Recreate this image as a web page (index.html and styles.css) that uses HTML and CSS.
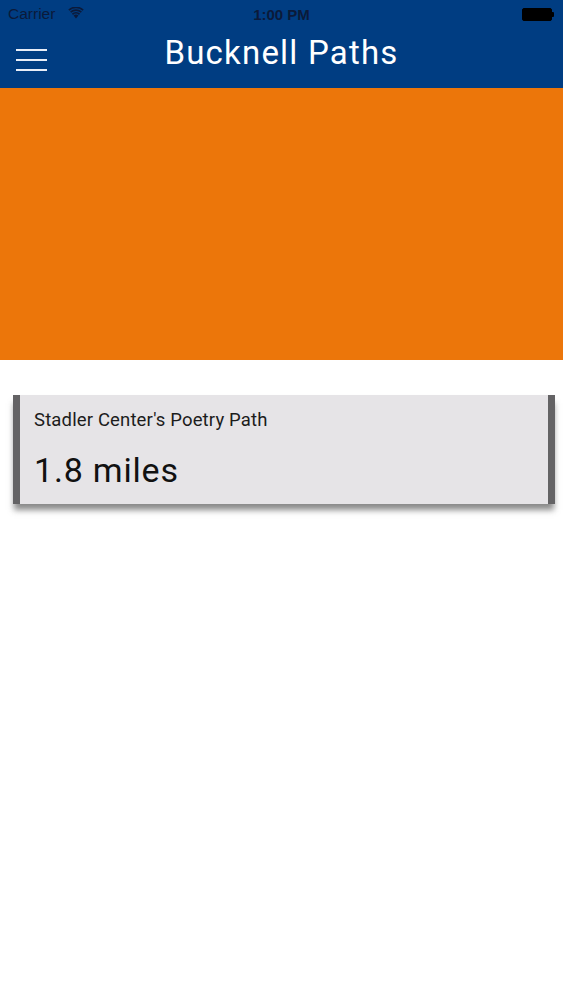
FILE: index.html
```html
<!DOCTYPE html>
<html>
<head>
<meta charset="utf-8">
<link rel="stylesheet" href="styles.css">
</head>
<body>
<div class="header">
  <div class="status">
    <div class="status-left">
      <span class="carrier">Carrier</span>
      <svg class="wifi" width="16" height="12" viewBox="0 0 16 12">
        <path d="M8 11.5 L5.6 8.6 A3.6 3.6 0 0 1 10.4 8.6 Z" fill="#0b1a3a"/>
        <path d="M3.9 6.6 A6.2 6.2 0 0 1 12.1 6.6 L11 7.9 A4.5 4.5 0 0 0 5 7.9 Z" fill="#0b1a3a"/>
        <path d="M2.1 4.5 A9 9 0 0 1 13.9 4.5 L12.8 5.8 A7.3 7.3 0 0 0 3.2 5.8 Z" fill="#0b1a3a"/>
        <path d="M0.3 2.4 A11.8 11.8 0 0 1 15.7 2.4 L14.6 3.7 A10.1 10.1 0 0 0 1.4 3.7 Z" fill="#0b1a3a"/>
      </svg>
    </div>
    <div class="time">1:00 PM</div>
    <div class="status-right">
      <div class="battery"></div>
      <div class="battery-nub"></div>
    </div>
  </div>
  <div class="navbar">
    <div class="menu">
      <span></span><span></span><span></span>
    </div>
    <div class="title">Bucknell Paths</div>
  </div>
</div>
<div class="banner"></div>
<div class="content">
  <div class="card">
    <div class="card-name">Stadler Center's Poetry Path</div>
    <div class="card-dist">1.8 miles</div>
  </div>
</div>
</body>
</html>
```
FILE: styles.css
```css
html, body {
  margin: 0;
  padding: 0;
  background: #ffffff;
  font-family: Roboto, "Liberation Sans", sans-serif;
}
.header {
  background: #003d82;
  height: 88px;
  display: flex;
  flex-direction: column;
}
.status {
  height: 28px;
  display: flex;
  align-items: center;
  justify-content: space-between;
  padding: 0 8px;
  position: relative;
  color: #0b1a3a;
  font-family: "Liberation Sans", Arial, sans-serif;
  font-size: 15.5px;
}
.status-left {
  display: flex;
  align-items: center;
  gap: 13px;
}
.wifi {
  margin-top: -3px;
}
.time {
  position: absolute;
  left: 0;
  right: 0;
  text-align: center;
  font-weight: bold;
  font-size: 15px;
  pointer-events: none;
}
.status-right {
  display: flex;
  align-items: center;
  margin-right: 1px;
}
.battery {
  width: 28px;
  height: 11px;
  border-radius: 2px;
  background: #000;
  border: 1px solid #000;
}
.battery-nub {
  width: 2px;
  height: 5px;
  background: #000;
  border-radius: 0 1px 1px 0;
}
.navbar {
  flex: 1;
  display: flex;
  align-items: center;
  position: relative;
}
.menu {
  margin-left: 16px;
  width: 31px;
  display: flex;
  flex-direction: column;
  gap: 8px;
  margin-top: 4px;
}
.menu span {
  display: block;
  height: 2px;
  background: #e8eef8;
}
.title {
  position: absolute;
  left: 0;
  right: 0;
  text-align: center;
  color: #ffffff;
  font-size: 33px;
  letter-spacing: 1.2px;
  top: 5px;
}
.banner {
  background: #ec760a;
  height: 272px;
}
.content {
  padding: 35px 8px 20px 13px;
}
.card {
  background: #e6e4e7;
  border-left: 7px solid #646365;
  border-right: 7px solid #646365;
  box-shadow: 0 7px 6px -1px rgba(60, 60, 60, 0.6);
  padding: 12px 14px 0 14px;
  height: 97px;
  display: flex;
  flex-direction: column;
}
.card-name {
  font-size: 18.5px;
  color: #1c1c1c;
  line-height: 26px;
  letter-spacing: 0.15px;
}
.card-dist {
  font-size: 34px;
  color: #111111;
  margin-top: 17px;
  line-height: 40px;
  letter-spacing: 0.8px;
}
```
